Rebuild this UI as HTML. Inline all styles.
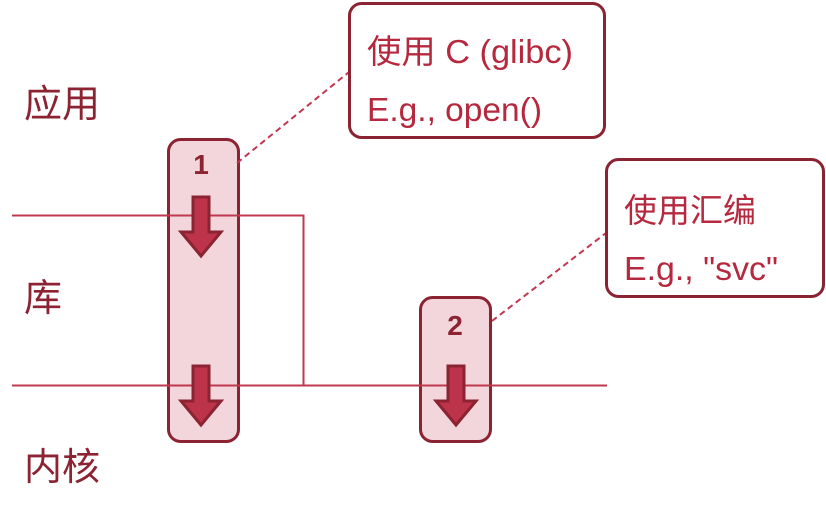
<!DOCTYPE html>
<html><head><meta charset="utf-8"><style>
html,body{margin:0;padding:0;background:#fff;}
svg{display:block;}
text{font-family:"Liberation Sans","Noto Sans CJK SC",sans-serif;}
</style></head><body>
<svg width="826" height="514" viewBox="0 0 826 514" xmlns="http://www.w3.org/2000/svg">
<defs>
<g id="arr"><path d="M-8,0 H8 V35 H20 L0,59 L-20,35 H-8 Z" fill="#bd344a" stroke="#8b2332" stroke-width="3" stroke-linejoin="miter"/></g>
</defs>
<rect x="168.5" y="139.5" width="70" height="302" rx="12" fill="#f2d6db" stroke="#8b2332" stroke-width="3"/>
<rect x="420.5" y="297.5" width="70" height="144" rx="12" fill="#f2d6db" stroke="#8b2332" stroke-width="3"/>
<polyline points="12,215.5 303.5,215.5 303.5,385.5" fill="none" stroke="#c0384f" stroke-width="2"/>
<line x1="12" y1="385.5" x2="607" y2="385.5" stroke="#c0384f" stroke-width="2"/>
<use href="#arr" x="201" y="197"/>
<use href="#arr" x="201" y="366"/>
<use href="#arr" x="456" y="366"/>
<text x="201" y="174" font-size="28" font-weight="bold" fill="#8b2332" text-anchor="middle">1</text>
<text x="455" y="335" font-size="28" font-weight="bold" fill="#8b2332" text-anchor="middle">2</text>
<line x1="237" y1="163" x2="349" y2="72" stroke="#c0384f" stroke-width="2" stroke-dasharray="6,4"/>
<line x1="492" y1="321" x2="606" y2="233" stroke="#c0384f" stroke-width="2" stroke-dasharray="6,4"/>
<rect x="349.5" y="3.5" width="255" height="134" rx="12" fill="#fff" stroke="#8b2332" stroke-width="3"/>
<rect x="606.5" y="159.5" width="217" height="137" rx="12" fill="#fff" stroke="#8b2332" stroke-width="3"/>
<text x="367" y="63" font-size="33" fill="#b5283e" textLength="206" lengthAdjust="spacingAndGlyphs">使用 C (glibc)</text>
<text x="367" y="121" font-size="33" fill="#b5283e" textLength="175" lengthAdjust="spacingAndGlyphs">E.g., open()</text>
<text x="624" y="222" font-size="33" fill="#b5283e">使用汇编</text>
<text x="624" y="280" font-size="33" fill="#b5283e" textLength="154" lengthAdjust="spacingAndGlyphs">E.g., "svc"</text>
<text x="24" y="117" font-size="38" fill="#8b2332">应用</text>
<text x="24" y="311" font-size="38" fill="#8b2332">库</text>
<text x="24" y="480" font-size="38" fill="#8b2332">内核</text>
</svg>
</body></html>
